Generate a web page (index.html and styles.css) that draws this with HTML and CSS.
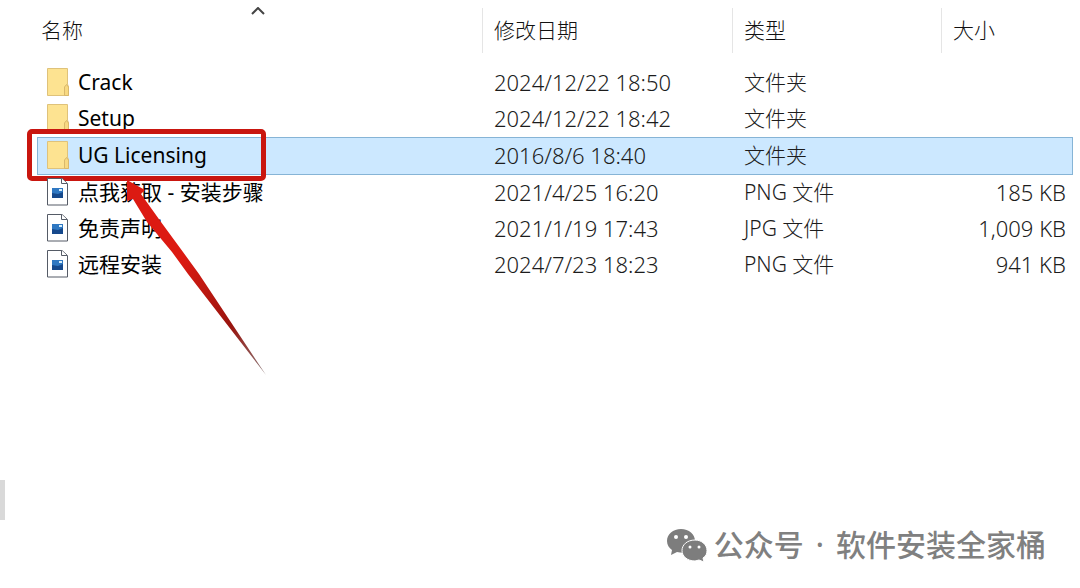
FILE: index.html
```html
<!DOCTYPE html>
<html lang="zh-CN">
<head>
    <meta charset="UTF-8">
    <meta name="viewport" content="width=device-width, initial-scale=1.0">
    <title>UG Licensing</title>
    <link rel="stylesheet" href="styles.css">
</head>
<body>
    <svg class="symbols" aria-hidden="true">
        <symbol id="folder" viewBox="0 0 24 30">
            <path d="M1.500 1.500H21.500V17L22.500 20V28.500H1.500Z" fill="#fde391" stroke="#dfc27a"/>
            <path d="M18.500 28.500V20L20.500 17.500L22.500 20V28.500Z" fill="#f8d981" stroke="#d9b86c"/>
        </symbol>
        <symbol id="picture" viewBox="0 0 24 30">
            <path d="M1.500 1.500H16L21.500 6.500V28H1.500Z" fill="#fff" stroke="#555b66"/>
            <path d="M15.500 1.500V6.500H21" fill="#fff" stroke="#555b66"/>
            <path d="M6 11H17V21H6Z" fill="#16498c"/>
            <path d="M6 11H17V15L12 17L6 16Z" fill="#2f78c2"/>
            <path d="M13 12H16V14H13Z" fill="#d8effc"/>
        </symbol>
    </svg>

    <main class="explorer">
        <table class="files">
            <colgroup>
                <col>
                <col class="col-date">
                <col class="col-type">
                <col class="col-size">
            </colgroup>
            <thead>
                <tr>
                    <th>
                        <div class="heading">名称
                            <svg class="sort" viewBox="0 0 14 8"><path d="M1 7L7 1L13 7"/></svg>
                        </div>
                    </th>
                    <th><div class="heading divided">修改日期</div></th>
                    <th><div class="heading divided">类型</div></th>
                    <th><div class="heading divided">大小</div></th>
                </tr>
            </thead>
            <tbody>
                <tr>
                    <td><div class="name"><svg class="icon"><use href="#folder"/></svg>Crack</div></td>
                    <td class="date">2024/12/22 18:50</td>
                    <td>文件夹</td>
                    <td></td>
                </tr>
                <tr>
                    <td><div class="name"><svg class="icon"><use href="#folder"/></svg>Setup</div></td>
                    <td class="date">2024/12/22 18:42</td>
                    <td>文件夹</td>
                    <td></td>
                </tr>
                <tr class="selected">
                    <td>
                        <div class="name"><svg class="icon"><use href="#folder"/></svg>UG Licensing</div>
                        <div class="marker"></div>
                        <svg class="arrow" viewBox="0 0 144 196">
                            <defs>
                                <linearGradient id="fade" x1="0" y1="0" x2="1" y2="1">
                                    <stop offset="0.400" stop-color="#dc1a12"/>
                                    <stop offset="0.750" stop-color="#98140e"/>
                                    <stop offset="1" stop-color="#8a7a7a"/>
                                </linearGradient>
                            </defs>
                            <path d="M4 0L22 10L18 14L38 42L60 72L76 94L143 195L65 94L49 72L24 42L10 19L4 21Z" fill="url(#fade)"/>
                        </svg>
                    </td>
                    <td class="date">2016/8/6 18:40</td>
                    <td>文件夹</td>
                    <td></td>
                </tr>
                <tr>
                    <td><div class="name"><svg class="icon"><use href="#picture"/></svg>点我获取 - 安装步骤</div></td>
                    <td class="date">2021/4/25 16:20</td>
                    <td>PNG 文件</td>
                    <td class="size">185 KB</td>
                </tr>
                <tr>
                    <td><div class="name"><svg class="icon"><use href="#picture"/></svg>免责声明</div></td>
                    <td class="date">2021/1/19 17:43</td>
                    <td>JPG 文件</td>
                    <td class="size">1,009 KB</td>
                </tr>
                <tr>
                    <td><div class="name"><svg class="icon"><use href="#picture"/></svg>远程安装</div></td>
                    <td class="date">2024/7/23 18:23</td>
                    <td>PNG 文件</td>
                    <td class="size">941 KB</td>
                </tr>
            </tbody>
        </table>
        <div class="scroll-thumb"></div>
        <footer class="account">
            <svg class="wechat" viewBox="0 0 42 34">
                <path d="M15 1C7 1 1 6 1 13C1 17 3 20 6 22L5 27L11 24C24 27 29 20 29 13C29 6 23 1 15 1Z" fill="#7d7d7d"/>
                <path d="M29 12C21 12 16 17 16 22.500C16 28 21 33 29 33L33 32L38 34L37 30C40 28 41 26 41 22.500C41 17 36 12 29 12Z" fill="#7d7d7d" stroke="#fff"/>
                <g fill="#fff">
                    <circle cx="10" cy="9" r="2"/><circle cx="20" cy="9" r="2"/>
                    <circle cx="24" cy="19" r="1.500"/><circle cx="33" cy="19" r="1.500"/>
                </g>
            </svg>
            <div class="account-name"><span>公众号</span><span>·</span><span>软件安装全家桶</span></div>
        </footer>
    </main>
</body>
</html>
```
FILE: styles.css
```css
* {
    box-sizing: border-box;
}
body {
    margin: 0;
    background-color: #fff;
    color: #1c1c1c;
    font-family: "Noto Sans", "Noto Sans CJK SC", sans-serif;
    font-size: 21px;
    line-height: 32px;
}
.symbols {
    display: none;
}
.explorer {
    position: relative;
    display: flex;
    flex-direction: column;
    min-height: 100vh;
    padding: 0 7px 24px 37px;
}
.files {
    width: 100%;
    table-layout: fixed;
    border-collapse: collapse;
}
.col-date {
    width: 250px;
}
.col-type {
    width: 209px;
}
.col-size {
    width: 132px;
}
th {
    padding: 8px 0 12px;
    font-weight: 300;
    text-align: left;
}
.heading {
    position: relative;
    display: flex;
    align-items: center;
    height: 45px;
    padding: 0 0 2px 4px;
    color: #111;
}
.divided {
    padding-left: 11px;
    border-left: 1px solid #e5e5e5;
}
.sort {
    position: absolute;
    top: -1px;
    left: 48%;
    width: 14px;
    height: 8px;
    fill: none;
    stroke: #444;
    stroke-width: 2;
}
td {
    height: 36px;
    padding: 0 7px 2px 12px;
    font-weight: 300;
    white-space: nowrap;
}
td:first-child {
    position: relative;
    padding-left: 9px;
    color: #000;
    font-weight: 400;
}
.name {
    display: flex;
    align-items: center;
    gap: 8px;
}
.icon {
    width: 24px;
    height: 30px;
}
.date,
.size {
    font-size: 22px;
}
.size {
    text-align: right;
}
.selected {
    background-color: #cce8ff;
    outline: 1px solid #86b4d6;
    outline-offset: -1px;
}
.selected td {
    height: 38px;
}
/* callout drawn over the selected row */
.marker {
    position: absolute;
    top: -8px;
    left: -10px;
    width: 239px;
    height: 52px;
    border: 5px solid #c9160f;
    border-radius: 5px;
}
.arrow {
    position: absolute;
    z-index: 1;
    top: 43px;
    left: 86px;
    width: 144px;
    height: 196px;
}
.scroll-thumb {
    position: absolute;
    top: 480px;
    left: 0;
    width: 5px;
    height: 40px;
    background-color: #d9d9d9;
}
.account {
    display: flex;
    align-items: center;
    align-self: flex-end;
    gap: 6px;
    margin-top: auto;
    padding-right: 27px;
    color: #808080;
    font-size: 30px;
    font-weight: 500;
    line-height: 38px;
}
.account-name {
    display: flex;
    gap: 12px;
}
.wechat {
    width: 42px;
    height: 34px;
}
```
